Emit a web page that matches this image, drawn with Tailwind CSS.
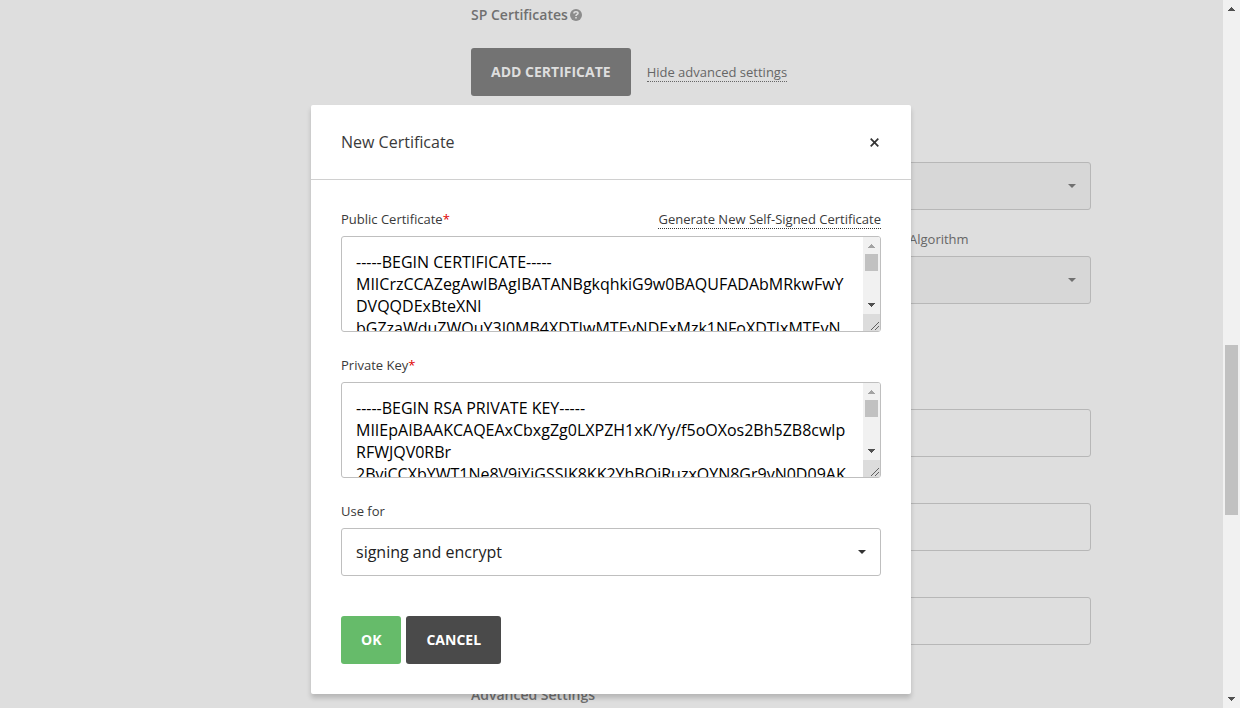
<!DOCTYPE html>
<html lang="en">
<head>
  <meta charset="UTF-8">
  <meta name="viewport" content="width=device-width, initial-scale=1.0">
  <title>Single Sign-on Settings</title>
  <script src="https://cdn.jsdelivr.net/npm/@tailwindcss/browser@4"></script>
</head>
<body class="flex h-screen overflow-hidden bg-[#dedede] font-['Open_Sans',sans-serif] text-[13px] leading-5 text-[#3a3a3a]">
  <div class="relative min-w-0 flex-1 overflow-hidden pr-px">
    <!-- Settings page -->
    <main class="mx-auto max-w-[960px] pt-[5px] pl-[340px] text-[#666]">
      <div class="flex items-center gap-[2px] text-sm leading-5 font-semibold text-[#707070]">
        <h2>SP Certificates</h2>
        <svg class="size-3" viewBox="0 0 12 12" aria-hidden="true">
          <circle cx="6" cy="6" r="6" fill="#8c8c8c"/>
          <path d="M4 4.6V4.2C4 3.2 4.8 2.7 6 2.7s2 .6 2 1.5c0 1.3-2 1.2-2 2.700" fill="none" stroke="#dedede" stroke-width="1.6"/>
          <path d="M5.2 8h1.6v1.6H5.2z" fill="#dedede"/>
        </svg>
      </div>
      <div class="mt-[23px] flex items-center gap-4">
        <button type="button" class="h-12 rounded-[3px] bg-[#737373] px-5 text-sm font-bold text-[#dedede]">ADD CERTIFICATE</button>
        <a href="#" class="border-b border-dotted border-[#666] leading-[18px]">Hide advanced settings</a>
      </div>

      <div class="relative mt-[66px]">
        <select aria-label="Signing" class="h-12 w-full appearance-none rounded-[3px] border border-[#b7b7b7] bg-[#d7d7d7]" disabled></select>
        <svg class="pointer-events-none absolute top-[22px] right-[15px] h-1 w-2" viewBox="0 0 8 4"><path d="M0 0h8L4 4z" fill="#707070"/></svg>
      </div>
      <div class="relative mt-[19px]">
        <label for="algorithm" class="mb-[7px] ml-auto block w-[182px]">Algorithm</label>
        <select id="algorithm" class="block h-12 w-full appearance-none rounded-[3px] border border-[#b7b7b7] bg-[#d7d7d7]" disabled></select>
        <svg class="pointer-events-none absolute right-[15px] bottom-[22px] h-1 w-2" viewBox="0 0 8 4"><path d="M0 0h8L4 4z" fill="#707070"/></svg>
      </div>

      <div class="mt-[105px] flex flex-col gap-[46px]">
        <input type="text" aria-label="First name" class="h-12 w-full rounded-[3px] border border-[#b7b7b7]">
        <input type="text" aria-label="Last name" class="h-12 w-full rounded-[3px] border border-[#b7b7b7]">
        <input type="text" aria-label="Email" class="h-12 w-full rounded-[3px] border border-[#b7b7b7]">
      </div>
      <h2 class="mt-10 text-sm leading-5 font-semibold text-[#707070]">Advanced Settings</h2>
    </main>

    <!-- Dialog -->
    <div class="absolute inset-0 flex items-start justify-center pt-[105px] pr-px">
      <section role="dialog" aria-labelledby="dialog-title" class="w-full max-w-[600px] rounded-[2px] bg-white shadow-[0_4px_5px_rgba(0,0,0,0.18)]">
        <header class="flex h-[75px] items-center justify-between border-b border-[#d0d0d0] px-[30px]">
          <h1 id="dialog-title" class="text-base">New Certificate</h1>
          <button type="button" aria-label="Close" class="p-[2px]">
            <svg class="size-[9px]" viewBox="0 0 9 9"><path d="M.7.7l7.6 7.6M8.3.7L.7 8.3" stroke="#333" stroke-width="1.7"/></svg>
          </button>
        </header>

        <form class="px-[30px] pt-[29px] pb-[30px]">
          <div class="mb-[7px] flex h-5 items-center justify-between">
            <label for="public-cert">Public Certificate<span class="text-[#e00000]">*</span></label>
            <a href="#" class="border-b border-dotted border-[#333] leading-[18px]">Generate New Self-Signed Certificate</a>
          </div>
          <div class="flex h-24 overflow-hidden rounded-[3px] border border-[#bfbfbf]">
            <textarea id="public-cert" class="min-w-0 flex-1 resize-none p-[14px] text-base leading-[22px] break-all text-black outline-none [scrollbar-width:none]">-----BEGIN CERTIFICATE-----
MIICrzCCAZegAwIBAgIBATANBgkqhkiG9w0BAQUFADAbMRkwFwYDVQQDExBteXNl
bGZzaWduZWQuY3J0MB4XDTIwMTEyNDExMzk1NFoXDTIxMTEyN</textarea>
            <div class="flex w-[17px] flex-col items-center bg-[#f1f1f1]" aria-hidden="true">
              <svg class="mt-[7px] h-1 w-[7px]" viewBox="0 0 7 4" shape-rendering="crispEdges"><path d="M3 0h1v1h1v1h1v1h1v1H0V3h1V2h1V1h1z" fill="#a3a3a3"/></svg>
              <div class="mt-[6px] h-[17px] w-[13px] bg-[#c1c1c1]"></div>
              <svg class="mt-auto mb-[7px] h-1 w-[7px]" viewBox="0 0 7 4" shape-rendering="crispEdges"><path d="M0 0h7v1H6v1H5v1H4v1H3V3H2V2H1V1H0z" fill="#505050"/></svg>
              <svg class="size-[17px] bg-[#dcdcdc]" viewBox="0 0 17 17"><path d="M8 16l8-8M12 16l4-4" stroke="#606060"/></svg>
            </div>
          </div>

          <label for="private-key" class="mt-[23px] mb-[7px] block">Private Key<span class="text-[#e00000]">*</span></label>
          <div class="flex h-24 overflow-hidden rounded-[3px] border border-[#bfbfbf]">
            <textarea id="private-key" class="min-w-0 flex-1 resize-none p-[14px] text-base leading-[22px] break-all text-black outline-none [scrollbar-width:none]">-----BEGIN RSA PRIVATE KEY-----
MIIEpAIBAAKCAQEAxCbxgZg0LXPZH1xK/Yy/f5oOXos2Bh5ZB8cwlpRFWJQV0RBr
2BviCCXbYWT1Ne8V9jYiGSSIK8KK2YhBOiRuzxQYN8Gr9yN0D09AK</textarea>
            <div class="flex w-[17px] flex-col items-center bg-[#f1f1f1]" aria-hidden="true">
              <svg class="mt-[7px] h-1 w-[7px]" viewBox="0 0 7 4" shape-rendering="crispEdges"><path d="M3 0h1v1h1v1h1v1h1v1H0V3h1V2h1V1h1z" fill="#a3a3a3"/></svg>
              <div class="mt-[6px] h-[17px] w-[13px] bg-[#c1c1c1]"></div>
              <svg class="mt-auto mb-[7px] h-1 w-[7px]" viewBox="0 0 7 4" shape-rendering="crispEdges"><path d="M0 0h7v1H6v1H5v1H4v1H3V3H2V2H1V1H0z" fill="#505050"/></svg>
              <svg class="size-[17px] bg-[#dcdcdc]" viewBox="0 0 17 17"><path d="M8 16l8-8M12 16l4-4" stroke="#606060"/></svg>
            </div>
          </div>

          <label for="use-for" class="mt-[23px] mb-[7px] block">Use for</label>
          <div class="relative">
            <select id="use-for" class="block h-12 w-full appearance-none rounded-[3px] border border-[#bfbfbf] px-[14px] text-base text-[#222]">
              <option>signing and encrypt</option>
            </select>
            <svg class="pointer-events-none absolute top-[22px] right-[15px] h-1 w-2" viewBox="0 0 8 4"><path d="M0 0h8L4 4z" fill="#333"/></svg>
          </div>

          <div class="mt-10 flex gap-[5px]">
            <button type="submit" class="h-12 rounded-[3px] bg-[#66bb6a] px-5 text-sm font-bold text-white">OK</button>
            <button type="button" class="h-12 rounded-[3px] bg-[#4a4a4a] px-5 text-sm font-bold text-white">CANCEL</button>
          </div>
        </form>
      </section>
    </div>
  </div>

  <!-- Page scrollbar -->
  <div class="flex w-[17px] shrink-0 flex-col items-center bg-[#f1f1f1] py-[7px]" aria-hidden="true">
    <svg class="h-1 w-[7px]" viewBox="0 0 7 4" shape-rendering="crispEdges"><path d="M3 0h1v1h1v1h1v1h1v1H0V3h1V2h1V1h1z" fill="#505050"/></svg>
    <div class="mt-[334px] h-[170px] w-[13px] bg-[#c1c1c1]"></div>
    <svg class="mt-auto h-1 w-[7px]" viewBox="0 0 7 4" shape-rendering="crispEdges"><path d="M0 0h7v1H6v1H5v1H4v1H3V3H2V2H1V1H0z" fill="#505050"/></svg>
  </div>
</body>
</html>
